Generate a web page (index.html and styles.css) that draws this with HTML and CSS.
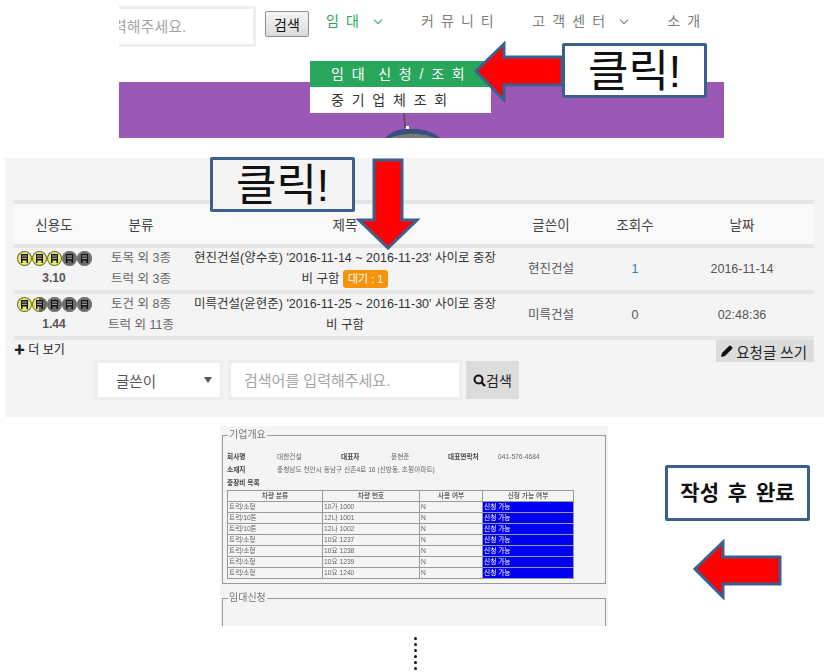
FILE: index.html
```html
<!DOCTYPE html>
<html lang="ko">
<head>
    <meta charset="UTF-8">
    <title>임대 신청 안내</title>
    <link rel="stylesheet" href="styles.css">
</head>
<body>
    <!-- 상단 메뉴 캡처 -->
    <section class="top-shot">
        <div class="top-nav">
            <div class="top-search">
                <div class="top-input"><span>력해주세요.</span></div>
                <button class="top-btn">검색</button>
            </div>
            <ul class="menu">
                <li class="on">임 대 <i class="caret"></i></li>
                <li>커 뮤 니 티</li>
                <li>고 객 센 터 <i class="caret"></i></li>
                <li>소 개</li>
            </ul>
        </div>
        <div class="banner">
            <svg class="tower" width="80" height="28" viewBox="0 0 80 28">
                <path d="M36 2 L37 18" stroke="#5a4a5a" stroke-width="1.6"/>
                <path d="M17 28 Q24 20 36 19 L50 19 Q64 21 72 28 Z" fill="#38507c"/>
                <path d="M21 28 Q36 23 50 24 Q60 25 68 28 Z" fill="#77777c"/>
                <path d="M38 16 h3 v3 h-3 Z" fill="#fff"/>
            </svg>
        </div>
    </section>

    <div class="dropdown">
        <a class="drop-on">임 대 &nbsp;신 청 / 조 회</a>
        <a>중 기 업 체 조 회</a>
    </div>

    <!-- 게시판 캡처 -->
    <section class="board">
        <table class="list">
            <thead>
                <tr>
                    <th class="c-score">신용도</th>
                    <th class="c-type">분류</th>
                    <th class="c-title">제목</th>
                    <th class="c-user">글쓴이</th>
                    <th class="c-hit">조회수</th>
                    <th class="c-date">날짜</th>
                </tr>
            </thead>
            <tbody>
                <tr>
                    <td>
                        <div class="coins">
                            <svg class="coin y" viewBox="0 0 15 15"><use href="#bld"/></svg>
                            <svg class="coin y" viewBox="0 0 15 15"><use href="#bld"/></svg>
                            <svg class="coin y" viewBox="0 0 15 15"><use href="#bld"/></svg>
                            <svg class="coin" viewBox="0 0 15 15"><use href="#bld"/></svg>
                            <svg class="coin" viewBox="0 0 15 15"><use href="#bld"/></svg>
                        </div>
                        <b class="score">3.10</b>
                    </td>
                    <td class="type">토목 외 3종<br>트럭 외 3종</td>
                    <td class="title">현진건설(양수호) '2016-11-14 ~ 2016-11-23' 사이로 중장<br>비 구함 <span class="wait">대기 : 1</span></td>
                    <td>현진건설</td>
                    <td class="hit">1</td>
                    <td>2016-11-14</td>
                </tr>
                <tr>
                    <td>
                        <div class="coins">
                            <svg class="coin y" viewBox="0 0 15 15"><use href="#bld"/></svg>
                            <svg class="coin half" viewBox="0 0 15 15"><use href="#bld"/></svg>
                            <svg class="coin" viewBox="0 0 15 15"><use href="#bld"/></svg>
                            <svg class="coin" viewBox="0 0 15 15"><use href="#bld"/></svg>
                            <svg class="coin" viewBox="0 0 15 15"><use href="#bld"/></svg>
                        </div>
                        <b class="score">1.44</b>
                    </td>
                    <td class="type">토건 외 8종<br>트럭 외 11종</td>
                    <td class="title">미륵건설(윤현준) '2016-11-25 ~ 2016-11-30' 사이로 중장<br>비 구함</td>
                    <td>미륵건설</td>
                    <td>0</td>
                    <td>02:48:36</td>
                </tr>
            </tbody>
        </table>
        <div class="board-foot">
            <a class="more"><b>✚</b> 더 보기</a>
            <a class="write">
                <svg width="12" height="12" viewBox="0 0 12 12"><path d="M0 12 L1 8 L8 1 Q9 0 10 1 L11 2 Q12 3 11 4 L4 11 Z" fill="#111"/></svg>요청글 쓰기
            </a>
        </div>
        <div class="board-search">
            <div class="sel">글쓴이<i></i></div>
            <div class="kw">검색어를 입력해주세요.</div>
            <button class="kw-btn">
                <svg width="13" height="13" viewBox="0 0 13 13"><circle cx="5.5" cy="5.5" r="4" fill="none" stroke="#111" stroke-width="2"/><path d="M8.5 8.5 L12 12" stroke="#111" stroke-width="2.4"/></svg>검색
            </button>
        </div>
    </section>

    <!-- 신청서 캡처 -->
    <section class="form-shot">
        <fieldset class="fs">
            <legend>기업개요</legend>
            <div class="info">
                <b>회사명</b><span class="v1">대한건설</span><b class="k2">대표자</b><span class="v2">윤현준</span><b class="k3">대표연락처</b><span>041-576-4684</span>
            </div>
            <div class="info">
                <b>소재지</b><span class="v1">충청남도 천안시 동남구 신촌4로 16 (신방동, 초원아파트)</span>
            </div>
            <div class="info"><b>중장비 목록</b></div>
            <table class="cars">
                <tr><th>차량 분류</th><th>차량 번호</th><th>사용 여부</th><th>신청 가능 여부</th></tr>
                <tr><td>트럭/소형</td><td>10가 1000</td><td>N</td><td class="ok">신청 가능</td></tr>
                <tr><td>트럭/10톤</td><td>12나 1001</td><td>N</td><td class="ok">신청 가능</td></tr>
                <tr><td>트럭/10톤</td><td>12나 1002</td><td>N</td><td class="ok">신청 가능</td></tr>
                <tr><td>트럭/소형</td><td>10요 1237</td><td>N</td><td class="ok">신청 가능</td></tr>
                <tr><td>트럭/소형</td><td>10요 1238</td><td>N</td><td class="ok">신청 가능</td></tr>
                <tr><td>트럭/소형</td><td>10요 1239</td><td>N</td><td class="ok">신청 가능</td></tr>
                <tr><td>트럭/소형</td><td>10요 1240</td><td>N</td><td class="ok">신청 가능</td></tr>
            </table>
        </fieldset>
        <fieldset class="fs fs2">
            <legend>임대신청</legend>
        </fieldset>
    </section>

    <div class="dots">
        <i></i><i></i><i></i><i></i><i></i><i></i>
    </div>

    <!-- 안내 말풍선, 화살표 -->
    <div class="note note-1">클릭!</div>
    <div class="note note-2">클릭!</div>
    <div class="note note-3">작성 후 완료</div>

    <svg class="arrow arrow-1" width="92" height="62" viewBox="0 0 92 62"><path d="M89 16 H31 V3 L3 30 L31 59 V44 H89 Z"/></svg>
    <svg class="arrow arrow-2" width="64" height="92" viewBox="0 0 64 92"><path d="M18 2 H46 V62 H61 L32 90 L3 62 H18 Z"/></svg>
    <svg class="arrow arrow-3" width="92" height="62" viewBox="0 0 92 62"><path d="M88 19 H31 V4 L3 31 L31 59 V46 H88 Z"/></svg>

    <svg width="0" height="0" class="defs">
        <defs>
            <g id="bld">
                <path d="M4 3 H11 V12 H9.5 V9.5 H5.5 V12 H4 Z" fill="#111"/>
                <path d="M5 5 H10 M5 7.3 H10" stroke="#ddd" stroke-width="0.9"/>
            </g>
        </defs>
    </svg>
</body>
</html>
```

FILE: styles.css
```css
/* 공통 */
html, body {
    height: 672px;
    overflow: hidden;
}

body {
    position: relative;
    margin: 0;
    width: 827px;
    background: #fff;
    color: #333;
    font-family: "Liberation Sans", "Noto Sans CJK KR", sans-serif;
    font-size: 12px;
}

/* 상단 메뉴 */
.top-shot {
    margin-left: 119px;
    width: 605px;
    height: 138px;
}

.top-nav {
    height: 82px;
    display: flex;
    align-items: flex-start;
    overflow: hidden;
}

.top-search {
    display: flex;
    align-items: flex-start;
    margin-top: 6px;
}

.top-input {
    width: 134px;
    height: 35px;
    border: 3px solid #eee;
    border-left: 0;
    border-radius: 0 3px 3px 0;
    overflow: hidden;
    color: #a5a5a5;
    font-size: 15px;
    line-height: 36px;
    text-indent: -6px;
    white-space: nowrap;
}

.top-btn {
    margin: 5px 0 0 9px;
    width: 44px;
    height: 26px;
    padding: 0;
    border: 1px solid #8f8f8f;
    border-radius: 2px;
    background: linear-gradient(#f4f4f4, #dcdcdc);
    color: #111;
    font-family: inherit;
    font-size: 14px;
}

.menu {
    display: flex;
    gap: 37px;
    margin: 11px 0 0 17px;
    padding: 0;
    list-style: none;
    color: #7c7c7c;
    font-size: 14px;
    letter-spacing: 1.6px;
    line-height: 20px;
    white-space: nowrap;
}

.menu .on {
    color: #27a65c;
}

.caret {
    display: inline-block;
    width: 5px;
    height: 5px;
    margin: 0 3px 3px 9px;
    border-right: 1px solid currentColor;
    border-bottom: 1px solid currentColor;
    transform: rotate(45deg);
}

.banner {
    position: relative;
    height: 56px;
    background: #9b59b6;
}

.tower {
    position: absolute;
    left: 249px;
    bottom: 0;
}

.dropdown {
    position: absolute;
    left: 310px;
    top: 61px;
    width: 181px;
    font-size: 14px;
    letter-spacing: 1.95px;
    line-height: 26px;
    background: #fff;
    color: #333;
}

.dropdown a {
    display: block;
    padding-left: 21px;
    white-space: nowrap;
}

.dropdown .drop-on {
    background: #27a65c;
    color: #fff;
}

/* 게시판 */
.board {
    margin: 20px 3px 0 5px;
    height: 259px;
    padding: 42px 10px 0 9px;
    box-sizing: border-box;
    background: #f4f4f4;
}

.list {
    width: 800px;
    border-collapse: collapse;
    table-layout: fixed;
    border-top: 4px solid #e5e5e5;
    border-bottom: 4px solid #e5e5e5;
    text-align: center;
}

.list th {
    height: 40px;
    padding: 0;
    background: #f9f9f9;
    border-bottom: 4px solid #e5e5e5;
    font-size: 13.5px;
    font-weight: 400;
    color: #444;
}

.list td {
    height: 42px;
    padding: 0;
    color: #555;
    font-size: 12.5px;
    line-height: 21px;
    vertical-align: middle;
}

.list tbody tr + tr td {
    border-top: 4px solid #e5e5e5;
}

.c-score { width: 80px; }
.c-type { width: 94px; }
.c-title { width: 314px; }
.c-user { width: 98px; }
.c-hit { width: 70px; }

.coins {
    display: flex;
    justify-content: center;
    height: 19px;
    align-items: center;
}

.coin {
    width: 15px;
    height: 15px;
    border-radius: 50%;
    background: #6b6b6b;
    box-shadow: inset 0 0 0 1px #7a7a7a;
}

.coin.y {
    background: #e8e86e;
    box-shadow: inset 0 0 0 1px #6e6e34;
}

.coin.half {
    background: linear-gradient(90deg, #e8e86e 50%, #6b6b6b 50%);
    box-shadow: inset 0 0 0 1px #6e6e34;
}

.list .score {
    color: #555;
    font-size: 12px;
}

.list .type {
    color: #666;
}

.list .title {
    color: #333;
}

.list .hit {
    color: #337ab7;
}

.wait {
    display: inline-block;
    padding: 0 5px;
    line-height: 18px;
    border-radius: 3px;
    background: #f7940c;
    color: #fff;
    font-size: 11px;
}

.board-foot {
    display: flex;
    justify-content: space-between;
    align-items: flex-start;
    height: 21px;
}

.more {
    color: #222;
    font-size: 12px;
}

.more b {
    font-size: 11px;
}

.write {
    display: flex;
    align-items: center;
    gap: 3px;
    height: 22px;
    padding: 0 7px 0 5px;
    background: #dcdcdc;
    color: #222;
    font-size: 14.5px;
}

.board-search {
    display: flex;
    align-items: flex-start;
    margin-left: 81px;
}

.sel {
    position: relative;
    width: 122px;
    height: 34px;
    margin-top: -1px;
    border: 3px solid #eee;
    background: #fff;
    line-height: 38px;
    text-indent: 18px;
    font-size: 14.5px;
    color: #555;
}

.sel i {
    position: absolute;
    right: 8px;
    top: 14px;
    border: 4px solid transparent;
    border-top: 6px solid #555;
    border-bottom: 0;
}

.kw {
    width: 228px;
    height: 34px;
    margin: -1px 0 0 5px;
    border: 3px solid #eee;
    background: #fff;
    color: #a5a5a5;
    font-size: 15px;
    line-height: 36px;
    text-indent: 13px;
}

.kw-btn {
    display: flex;
    align-items: center;
    justify-content: center;
    width: 53px;
    height: 38px;
    margin: 0 0 0 4px;
    padding: 0;
    border: 0;
    background: #dcdcdc;
    color: #222;
    font-family: inherit;
    font-size: 14px;
}

/* 신청서 캡처 */
.form-shot {
    margin: 9px 0 0 220px;
    width: 388px;
    height: 200px;
    padding: 4px 2px 0;
    box-sizing: border-box;
    background: #f4f4f4;
    overflow: hidden;
    color: #666;
    font-size: 6.7px;
    filter: blur(0.4px);
}

.fs {
    margin: 0;
    padding: 10px 6px 3px 4px;
    border: 1px solid #999;
    height: 154px;
    box-sizing: border-box;
}

.fs2 {
    margin-top: 9px;
    height: 60px;
}

.fs legend {
    padding: 0 1px;
    margin-left: 1px;
    color: #777;
    font-size: 10px;
    line-height: 10px;
}

.info {
    display: flex;
    height: 13px;
    line-height: 13px;
    white-space: nowrap;
}

.info b {
    width: 50px;
    color: #444;
}

.info .v1 { width: 64px; }
.info .k2 { width: 50px; }
.info .v2 { width: 57px; }
.info .k3 { width: 50px; }

.cars {
    width: 347px;
    margin-top: 1px;
    border-collapse: collapse;
    table-layout: fixed;
    border: 1px solid #888;
}

.cars th,
.cars td {
    height: 10px;
    padding: 0 1px;
    border: 1px solid #999;
    line-height: 8px;
    font-size: 6.7px;
    font-weight: 400;
    text-align: left;
}

.cars th {
    text-align: center;
    font-weight: 700;
}

.cars th:nth-child(1) { width: 92px; }
.cars th:nth-child(2) { width: 94px; }
.cars th:nth-child(3) { width: 60px; }

.cars .ok {
    background: #0000f0;
    color: #fff;
}

/* 점선 */
.dots {
    display: flex;
    flex-direction: column;
    gap: 3px;
    margin: 11px 0 0 414px;
}

.dots i {
    width: 3px;
    height: 3px;
    border-radius: 50%;
    background: #111;
}

/* 말풍선 */
.note {
    position: absolute;
    width: 145px;
    height: 55px;
    box-sizing: border-box;
    border: 3px solid #3c5f8d;
    border-radius: 2px;
    background: #fff;
    color: #111;
    font-size: 44px;
    line-height: 52px;
    text-align: center;
}

.note-1 { left: 562px; top: 43px; }
.note-2 { left: 210px; top: 157px; background: #f4f4f4; }

.note-3 {
    left: 665px;
    top: 465px;
    height: 56px;
    font-size: 21px;
    font-weight: 700;
    line-height: 50px;
    word-spacing: 3px;
}

/* 화살표 */
.arrow {
    position: absolute;
}

.arrow path {
    fill: #f00;
    stroke: #3c5f8d;
    stroke-width: 3;
}

.arrow-1 { left: 473px; top: 41px; }
.arrow-2 { left: 356px; top: 158px; }
.arrow-3 { left: 692px; top: 538px; }

.defs {
    position: absolute;
}
```
